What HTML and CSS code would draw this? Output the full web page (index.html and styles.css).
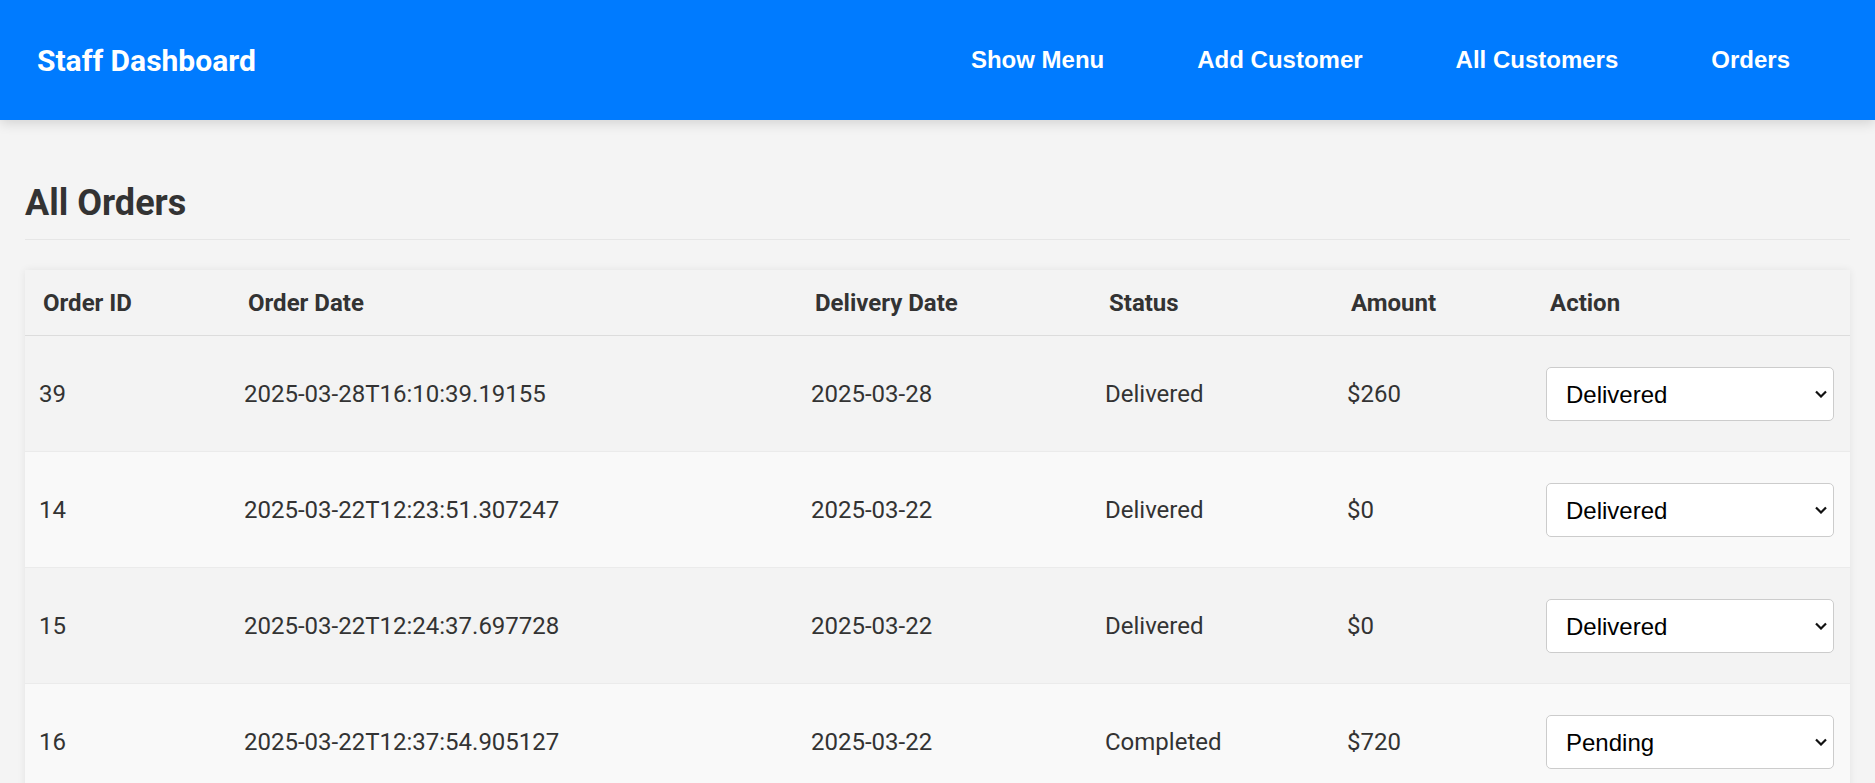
FILE: index.html
```html
<!DOCTYPE html>
<html lang="en">

<head>
    <meta charset="UTF-8">
    <meta name="viewport" content="width=device-width, initial-scale=1.0">
    <title>Staff Dashboard</title>
    <link rel="stylesheet" href="styles.css">
</head>

<body>
    <header class="top-bar">
        <div class="brand">Staff Dashboard</div>
        <nav class="nav-links">
            <a href="#">Show Menu</a>
            <a href="#">Add Customer</a>
            <a href="#">All Customers</a>
            <a href="#">Orders</a>
        </nav>
    </header>

    <main class="content">
        <h2>All Orders</h2>
        <table class="orders-table">
            <colgroup>
                <col class="col-id">
                <col class="col-date">
                <col class="col-delivery">
                <col class="col-status">
                <col class="col-amount">
                <col class="col-action">
            </colgroup>
            <thead>
                <tr>
                    <th>Order ID</th>
                    <th>Order Date</th>
                    <th>Delivery Date</th>
                    <th>Status</th>
                    <th>Amount</th>
                    <th>Action</th>
                </tr>
            </thead>
            <tbody>
                <tr>
                    <td>39</td>
                    <td>2025-03-28T16:10:39.19155</td>
                    <td>2025-03-28</td>
                    <td>Delivered</td>
                    <td>$260</td>
                    <td>
                        <div class="select-wrap">
                            <select class="status-select">
                                <option>Pending</option>
                                <option>Completed</option>
                                <option selected>Delivered</option>
                            </select>
                            <svg class="chevron" viewBox="0 0 12 8"><path d="M1 1.5l5 5 5-5" /></svg>
                        </div>
                    </td>
                </tr>
                <tr>
                    <td>14</td>
                    <td>2025-03-22T12:23:51.307247</td>
                    <td>2025-03-22</td>
                    <td>Delivered</td>
                    <td>$0</td>
                    <td>
                        <div class="select-wrap">
                            <select class="status-select">
                                <option>Pending</option>
                                <option>Completed</option>
                                <option selected>Delivered</option>
                            </select>
                            <svg class="chevron" viewBox="0 0 12 8"><path d="M1 1.5l5 5 5-5" /></svg>
                        </div>
                    </td>
                </tr>
                <tr>
                    <td>15</td>
                    <td>2025-03-22T12:24:37.697728</td>
                    <td>2025-03-22</td>
                    <td>Delivered</td>
                    <td>$0</td>
                    <td>
                        <div class="select-wrap">
                            <select class="status-select">
                                <option>Pending</option>
                                <option>Completed</option>
                                <option selected>Delivered</option>
                            </select>
                            <svg class="chevron" viewBox="0 0 12 8"><path d="M1 1.5l5 5 5-5" /></svg>
                        </div>
                    </td>
                </tr>
                <tr>
                    <td>16</td>
                    <td>2025-03-22T12:37:54.905127</td>
                    <td>2025-03-22</td>
                    <td>Completed</td>
                    <td>$720</td>
                    <td>
                        <div class="select-wrap">
                            <select class="status-select">
                                <option selected>Pending</option>
                                <option>Completed</option>
                                <option>Delivered</option>
                            </select>
                            <svg class="chevron" viewBox="0 0 12 8"><path d="M1 1.5l5 5 5-5" /></svg>
                        </div>
                    </td>
                </tr>
            </tbody>
        </table>
    </main>
</body>

</html>
```

FILE: styles.css
```css
body {
    font-family: Roboto, "Liberation Sans", Arial, sans-serif;
    margin: 0;
    padding: 0;
    background-color: #f4f4f4;
    color: #333;
}

.top-bar {
    background-color: #007bff;
    height: 120px;
    padding: 0 85px 0 37px;
    display: flex;
    align-items: center;
    justify-content: space-between;
    box-shadow: 0 3px 12px rgba(0, 0, 0, 0.14);
    position: relative;
}

.brand {
    color: white;
    font-size: 30px;
    font-weight: bold;
}

.nav-links {
    display: flex;
    gap: 93px;
}

.nav-links a {
    color: white;
    text-decoration: none;
    font-family: "Liberation Sans", Arial, sans-serif;
    font-size: 24px;
    font-weight: bold;
}

.content {
    padding: 0 25px;
}

.content h2 {
    font-size: 36px;
    margin: 62px 0 30px;
    padding-bottom: 15px;
    border-bottom: 1px solid #e6e6e6;
    color: #333;
}

.orders-table {
    width: 100%;
    border-collapse: collapse;
    table-layout: fixed;
    background-color: #f3f3f3;
    box-shadow: 0 0 8px rgba(0, 0, 0, 0.07);
    font-size: 24px;
}

.col-id { width: 205px; }
.col-date { width: 567px; }
.col-delivery { width: 294px; }
.col-status { width: 242px; }
.col-amount { width: 199px; }
.col-action { width: 318px; }

.orders-table th {
    text-align: left;
    font-weight: bold;
    padding: 19px 18px 18px;
    border-bottom: 1px solid #dcdcdc;
}

.orders-table td {
    padding: 31px 14px 30px;
    border-bottom: 1px solid #ebebeb;
}

.orders-table tbody tr:nth-child(even) {
    background-color: #f9f9f9;
}

.select-wrap {
    position: relative;
    width: 288px;
}

.status-select {
    display: block;
    width: 100%;
    height: 54px;
    padding: 0 40px 0 19px;
    font-family: "Liberation Sans", Arial, sans-serif;
    font-size: 24px;
    color: black;
    background-color: white;
    border: 1px solid #ccc;
    border-radius: 5px;
    appearance: none;
    -webkit-appearance: none;
}

.chevron {
    position: absolute;
    right: 7px;
    top: 23px;
    width: 12px;
    height: 8px;
    pointer-events: none;
}

.chevron path {
    fill: none;
    stroke: #111;
    stroke-width: 2.2;
}
```
